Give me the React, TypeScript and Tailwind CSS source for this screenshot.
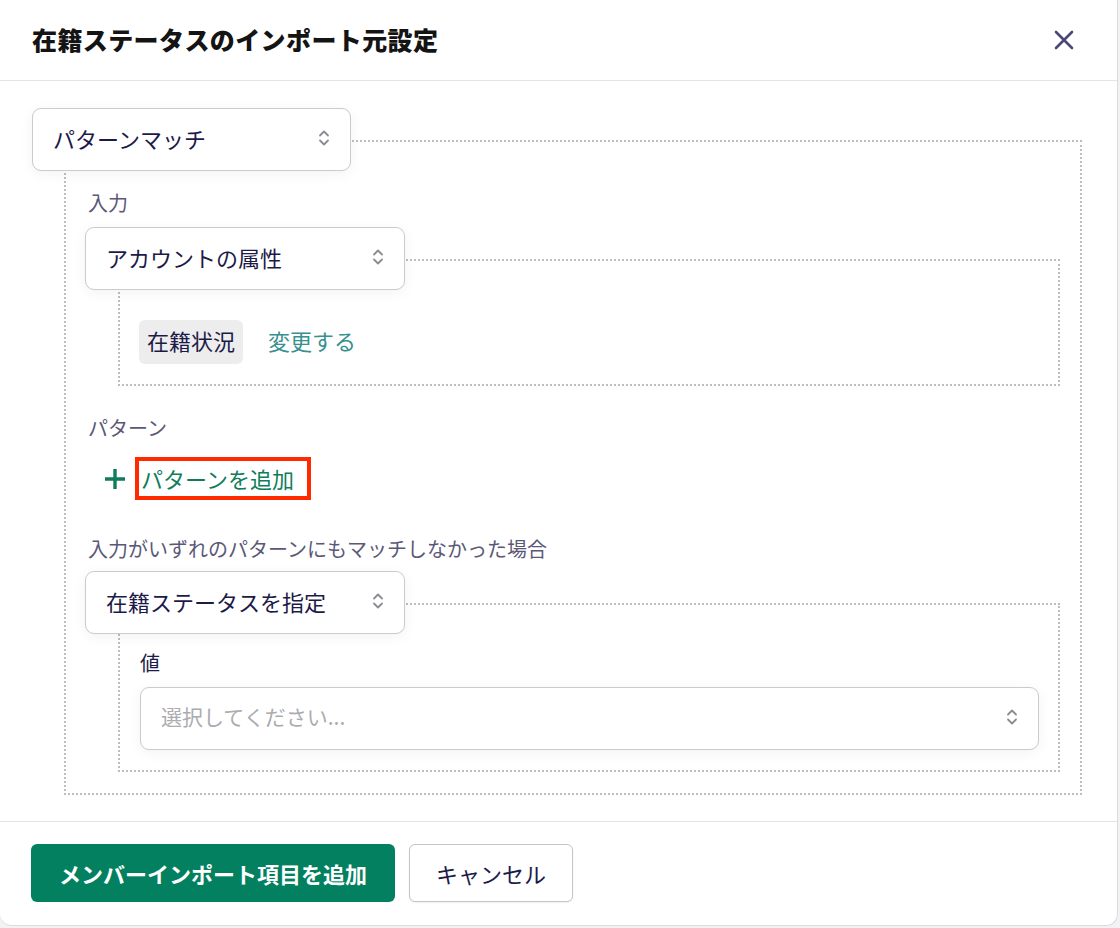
import { ReactNode } from 'react'

const font = { fontFamily: '"Noto Sans CJK JP", "Noto Sans", sans-serif' }

function Chevrons() {
  return (
    <svg width="12" height="20" viewBox="0 0 12 20" fill="none" className="shrink-0">
      <path d="M2 7.5 6 3.5l4 4" stroke="#8b8b93" strokeWidth="1.8" strokeLinecap="round" strokeLinejoin="round" />
      <path d="M2 12.5 6 16.5l4-4" stroke="#8b8b93" strokeWidth="1.8" strokeLinecap="round" strokeLinejoin="round" />
    </svg>
  )
}

function Select({ label, placeholder, className }: { label: string; placeholder?: boolean; className?: string }) {
  return (
    <div
      className={
        'relative z-10 flex h-[63px] items-center justify-between rounded-[9px] border border-[#cacacf] bg-white pl-[20px] pr-[20px] pb-[3px] shadow-[0_3px_14px_rgba(0,0,0,0.05)] ' +
        (className ?? '')
      }
    >
      <span className={placeholder ? 'text-[21px] text-[#ababb0]' : 'text-[22px] text-[#1c1a48]'}>{label}</span>
      <Chevrons />
    </div>
  )
}

function Branch({ select, children, outer }: { select: ReactNode; children: ReactNode; outer?: boolean }) {
  return (
    <div className="flex flex-col">
      {select}
      <div
        className={
          'border-2 border-dotted border-[#bcbcc2] ' +
          (outer
            ? '-mt-[31px] ml-[32px] pl-[19px] pr-[20px] pt-[47px] pb-[21px]'
            : '-mt-[31px] ml-[33px] pl-[19px] pr-[19px] pb-[20px]')
        }
      >
        {children}
      </div>
    </div>
  )
}

function Label({ children }: { children: ReactNode }) {
  return <div className="pl-[3px] text-[20px] leading-[28px] text-[#5b5877]">{children}</div>
}

export default function App() {
  return (
    <div className="min-h-screen bg-[#f2f2f4]" style={font}>
      <div className="flex h-[926px] w-[1118px] flex-col rounded-b-xl border-r border-b border-[#dcdce0] bg-white">
        <div className="flex h-[81px] items-center justify-between border-b border-[#e3e3e8] pl-[32px] pr-[42px]">
          <h1 className="text-[25px] font-black tracking-[0.4px] text-[#141414]">在籍ステータスのインポート元設定</h1>
          <svg width="22" height="22" viewBox="0 0 22 22" fill="none">
            <path d="M3 3l16 16M19 3 3 19" stroke="#4b4873" strokeWidth="2.6" strokeLinecap="round" />
          </svg>
        </div>

        <div className="flex-1 pt-[27px] pl-[32px] pr-[35px]">
          <Branch outer select={<Select label="パターンマッチ" className="w-[319px]" />}>
            <Label>入力</Label>
            <div className="mt-[10px]">
              <Branch select={<Select label="アカウントの属性" className="w-[320px]" />}>
                <div className="flex items-center gap-[25px] pt-[59px]">
                  <span className="rounded-md bg-[#ededee] px-[8px] pt-[3px] pb-[7px] text-[22px] leading-[34px] text-[#1c1a48]">在籍状況</span>
                  <span className="pb-[4px] text-[22px] text-[#38908f]">変更する</span>
                </div>
              </Branch>
            </div>

            <div className="mt-[28px]">
              <Label>パターン</Label>
            </div>
            <div className="mt-[15px] flex items-center pl-[18px]">
              <svg width="24" height="24" viewBox="0 0 24 24" fill="none">
                <path d="M12 2v20M2 12h20" stroke="#0f7d5c" strokeWidth="3.4" />
              </svg>
              <div className="ml-[8px] flex h-[43px] items-center border-[4px] border-[#ff2a00] pl-[2px] pr-[13px]">
                <span className="text-[22px] text-[#0f7d5c]">パターンを追加</span>
              </div>
            </div>

            <div className="mt-[35px]">
              <Label>入力がいずれのパターンにもマッチしなかった場合</Label>
            </div>
            <div className="mt-[8px]">
              <Branch select={<Select label="在籍ステータスを指定" className="w-[320px]" />}>
                <div className="pt-[44px] pl-[1px]">
                  <div className="text-[20px] leading-[28px] text-[#1c1a48]">値</div>
                  <Select label="選択してください..." placeholder className="mt-[10px] w-full" />
                </div>
              </Branch>
            </div>
          </Branch>
        </div>

        <div className="flex h-[104px] items-start gap-[14px] border-t border-[#e3e3e8] pl-[31px] pt-[22px]">
          <button type="button" className="h-[58px] w-[364px] rounded-md bg-[#03805f] text-[22px] font-bold text-white">
            メンバーインポート項目を追加
          </button>
          <button
            type="button"
            className="h-[58px] w-[164px] rounded-md border border-[#c4c4ca] bg-white text-[22px] text-[#1c1a48] shadow-[0_1px_2px_rgba(0,0,0,0.06)]"
          >
            キャンセル
          </button>
        </div>
      </div>
    </div>
  )
}
